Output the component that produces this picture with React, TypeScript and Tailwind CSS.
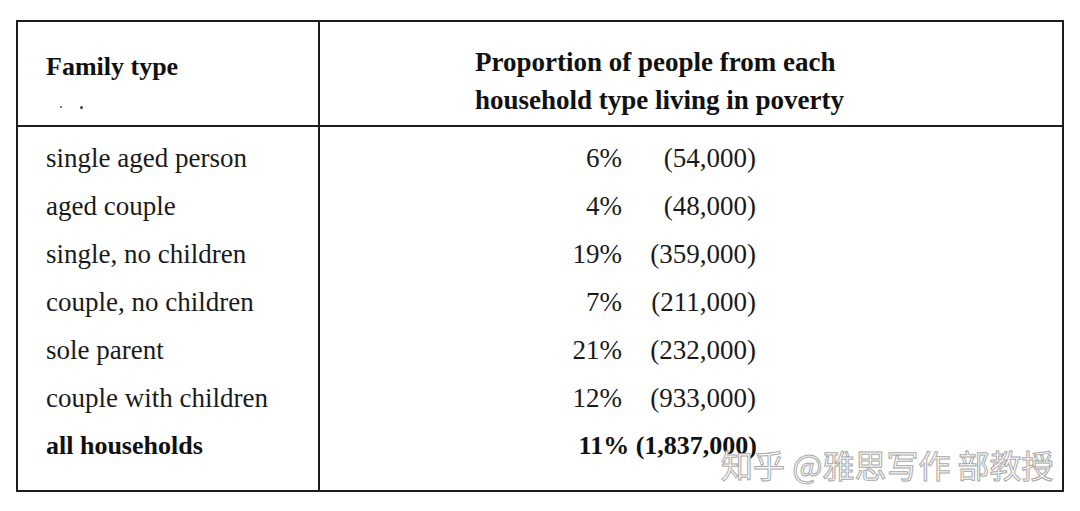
const rows = [
  { type: 'single aged person', pct: '6%', count: '(54,000)' },
  { type: 'aged couple', pct: '4%', count: '(48,000)' },
  { type: 'single, no children', pct: '19%', count: '(359,000)' },
  { type: 'couple, no children', pct: '7%', count: '(211,000)' },
  { type: 'sole parent', pct: '21%', count: '(232,000)' },
  { type: 'couple with children', pct: '12%', count: '(933,000)' },
]

const serif = "font-['Liberation_Serif','Times_New_Roman',serif]"

const App = () => {
  return (
    <div className={`relative min-h-screen w-[1080px] bg-white pt-[20px] pl-[16px] text-[#1a1a1a] ${serif}`}>
      <div className="flex h-[472px] w-[1048px] flex-col border-2 border-[#1e1e1e]">
        {/* header */}
        <div className="flex h-[105px] border-b-2 border-[#1e1e1e]">
          <div className="w-[302px] border-r-2 border-[#1e1e1e] pt-[30px] pl-[28px]">
            <div className="text-[26px] leading-[30px] font-bold text-[#111]">Family type</div>
            <div className="mt-[24px] ml-[14px] flex gap-[18px]">
              <span className="h-[2px] w-[2px] rounded-full bg-[#555]" />
              <span className="h-[3px] w-[3px] rounded-full bg-[#444]" />
            </div>
          </div>
          <div className="flex-1 pt-[21px] pl-[155px] text-[27px] leading-[38px] font-bold text-[#111]">
            <div>Proportion of people from each</div>
            <div>household type living in poverty</div>
          </div>
        </div>

        {/* body */}
        <div className="flex flex-1">
          <div className="w-[302px] border-r-2 border-[#1e1e1e] pt-[7px] pl-[28px]">
            {rows.map((row) => (
              <div key={row.type} className="h-[48px] text-[27px] leading-[48px]">
                {row.type}
              </div>
            ))}
            <div className="h-[48px] text-[26px] leading-[48px] font-bold text-[#111]">all households</div>
          </div>
          <div className="flex-1 pt-[7px]">
            {rows.map((row) => (
              <div key={row.type} className="flex h-[48px] text-[27px] leading-[48px]">
                <span className="w-[302px] text-right">{row.pct}</span>
                <span className="w-[134px] text-right">{row.count}</span>
              </div>
            ))}
            <div className="flex h-[48px] text-[26px] leading-[48px] font-bold text-[#111]">
              <span className="w-[437px] text-right">11% (1,837,000)</span>
            </div>
          </div>
        </div>
      </div>

      {/* watermark */}
      <div className="absolute top-[443px] left-[721px] font-['Noto_Sans_CJK_SC',sans-serif] text-[32px] leading-[42px] text-white [-webkit-text-stroke:1px_#a8a8a8]">
        知乎 @雅思写作 部教授
      </div>
    </div>
  )
}

export default App
